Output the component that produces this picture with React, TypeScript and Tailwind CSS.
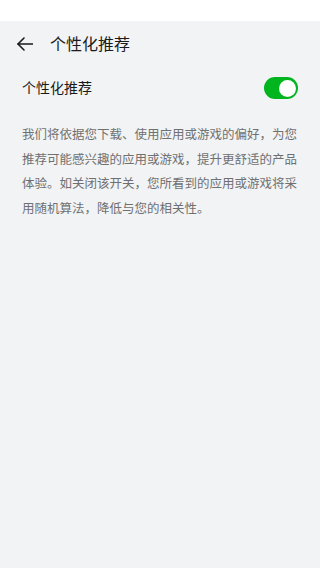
export default function App() {
  return (
    <div
      className="min-h-[568px] bg-[#f1f3f5]"
      style={{ fontFamily: '"Noto Sans", "Noto Sans CJK SC", sans-serif' }}
    >
      <div className="h-[21px] bg-white" />

      <header className="h-[46px] flex items-center pl-[17px]">
        <svg width="16" height="14" viewBox="0 0 16 14" fill="none" stroke="#1a1a1a" strokeWidth="1.6" strokeLinecap="round" strokeLinejoin="round">
          <path d="M1 7H15.5" />
          <path d="M7 1L1 7L7 13" />
        </svg>
        <h1 className="ml-[17px] text-[16px] text-[#1a1a1a] font-normal leading-none">个性化推荐</h1>
      </header>

      <div className="h-[42px] flex items-center justify-between px-[22px]">
        <span className="text-[14px] text-[#1a1a1a] leading-none">个性化推荐</span>
        <div className="w-[34px] h-[22px] rounded-full bg-[#00b51d] flex items-center justify-end pr-[2px]">
          <div className="w-[17px] h-[17px] rounded-full bg-white" />
        </div>
      </div>

      <p className="px-[22px] pt-[14px] text-[12.5px] leading-[24.5px] text-[#707070]">
        我们将依据您下载、使用应用或游戏的偏好，为您推荐可能感兴趣的应用或游戏，提升更舒适的产品体验。如关闭该开关，您所看到的应用或游戏将采用随机算法，降低与您的相关性。
      </p>
    </div>
  )
}
